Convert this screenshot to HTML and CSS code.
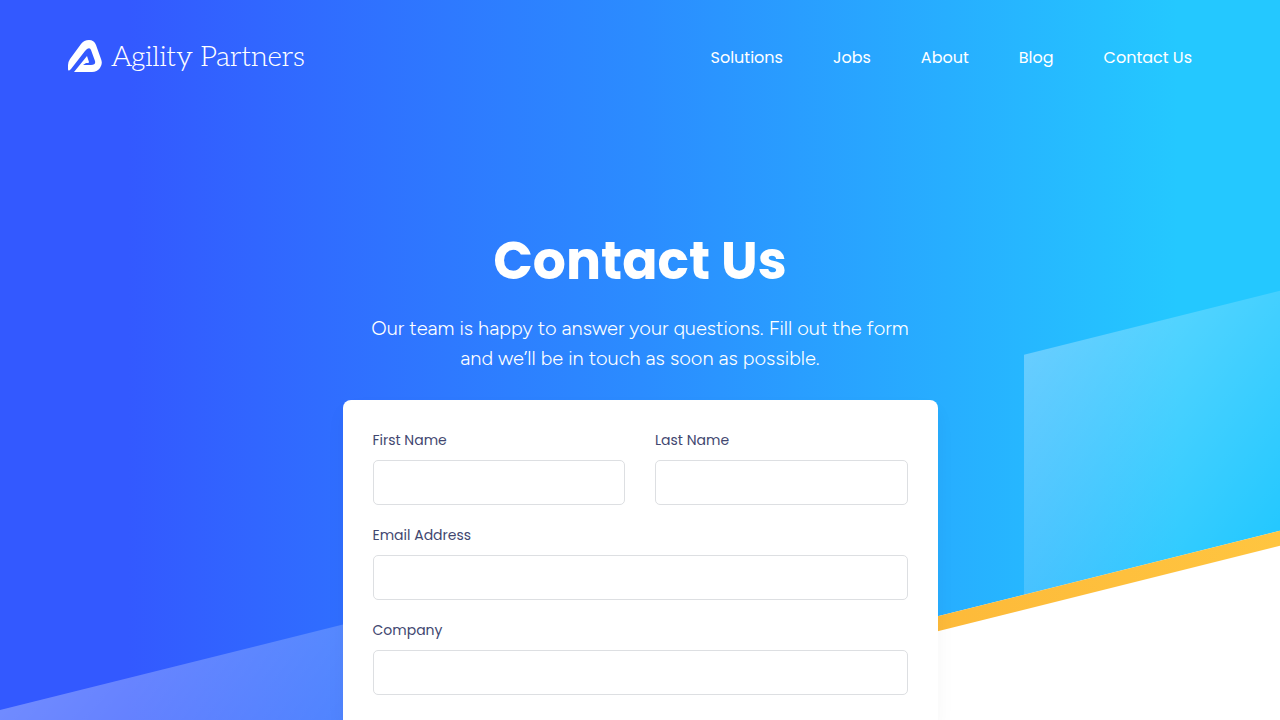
FILE: index.html
```html
<!DOCTYPE html>
<html lang="en">
<head>
<meta charset="utf-8">
<meta name="viewport" content="width=device-width, initial-scale=1">
<title>Contact Us | Agility Partners</title>
<link rel="stylesheet" href="styles.css">
</head>
<body>
<div class="page">
  <div class="backdrop" aria-hidden="true">
    <div class="stripe stripe-left"></div>
    <div class="stripe stripe-right"></div>
    <div class="stripe stripe-edge"></div>
  </div>
  <header class="header">
    <a class="brand" href="#">
      <svg class="brand-mark" viewBox="0 0 34 32" aria-hidden="true">
        <path fill="#fff" d="M0 29V25Q0 22 2 19L13 4Q16 0 21 0Q26 0 28 5L33 19Q35 24 32 28Q29 32 24 32H6L19 16L21 22Q21 23 20 23H18L15 25H23Q28 25 27 21L23 10Q22 7 19 9L17 11L3 29Q0 32 0 29Z"/>
      </svg>
      <span class="brand-name">Agility Partners</span>
    </a>
    <nav class="nav">
      <a href="#">Solutions</a>
      <a href="#">Jobs</a>
      <a href="#">About</a>
      <a href="#">Blog</a>
      <a href="#">Contact Us</a>
    </nav>
  </header>
  <main class="main">
    <h1 class="title">Contact Us</h1>
    <p class="lead">Our team is happy to answer your questions. Fill out the form and we’ll be in touch as soon as possible.</p>
    <form class="card">
      <div class="field">
        <label for="first">First Name</label>
        <input id="first" type="text">
      </div>
      <div class="field">
        <label for="last">Last Name</label>
        <input id="last" type="text">
      </div>
      <div class="field field-wide">
        <label for="email">Email Address</label>
        <input id="email" type="email">
      </div>
      <div class="field field-wide">
        <label for="company">Company</label>
        <input id="company" type="text">
      </div>
    </form>
  </main>
</div>
</body>
</html>
```
FILE: styles.css
```css
* { box-sizing: border-box; }

body {
  margin: 0;
  background: #fff;
  color: #424770;
  font-family: Poppins, Inter, sans-serif;
}

.page {
  position: relative;
  display: flex;
  flex-direction: column;
  min-height: 100vh;
  overflow: hidden;
}

/* Slanted gradient panel behind the content */
.backdrop {
  position: absolute;
  top: -400px;
  left: 0;
  right: 0;
  height: 1250px;
  transform: skewY(-14deg);
  transform-origin: left bottom;
  background: linear-gradient(90deg, #3359ff 10%, #2b8cff 50%, #24c8ff 92%);
}

.stripe { position: absolute; }

.stripe-left {
  left: 0;
  bottom: -100px;
  width: 33%;
  height: 240px;
  background: linear-gradient(135deg, rgba(255, 255, 255, 0.3), rgba(255, 255, 255, 0.08));
}

.stripe-right {
  right: 0;
  bottom: 0;
  width: 20%;
  height: 240px;
  background: linear-gradient(135deg, rgba(255, 255, 255, 0.3), rgba(255, 255, 255, 0));
}

.stripe-edge {
  right: 0;
  bottom: -15px;
  width: 50%;
  height: 15px;
  background: linear-gradient(90deg, #fbb034, #ffc540);
}

.header {
  position: relative;
  display: flex;
  justify-content: space-between;
  align-items: flex-start;
  padding: 36px 88px 0 68px;
}

.brand {
  display: flex;
  align-items: center;
  gap: 9px;
  height: 40px;
  color: #fff;
  text-decoration: none;
}

.brand-mark { width: 34px; height: 32px; }

.brand-name {
  padding-top: 4px;
  font-family: Museo, Aleo, "Roboto Slab", Lato, sans-serif;
  font-size: 28px;
  font-weight: 350;
  line-height: 40px;
}

.nav { display: flex; gap: 50px; }

.nav a {
  color: #fff;
  font-size: 16px;
  line-height: 44px;
  text-decoration: none;
}

.main {
  position: relative;
  flex: 1;
  display: flex;
  flex-direction: column;
  align-items: center;
  padding-top: 151px;
}

.title {
  margin: 0;
  color: #fff;
  font-size: 52px;
  font-weight: 700;
  line-height: 60px;
}

.lead {
  max-width: 595px;
  margin: 22px 0 27px;
  padding: 0 24px;
  color: #fff;
  font-family: "Proxima Nova", Figtree, Lato, sans-serif;
  font-size: 20px;
  font-weight: 350;
  font-variant-ligatures: none;
  line-height: 30px;
  text-align: center;
}

.card {
  flex: 1;
  display: grid;
  grid-template-columns: 1fr 1fr;
  align-content: start;
  gap: 20px 30px;
  width: 100%;
  max-width: 595px;
  padding: 30px 30px 25px;
  border-radius: 8px 8px 0 0;
  background: #fff;
  box-shadow: 0 10px 20px rgba(0, 0, 0, 0.04);
}

.field { display: flex; flex-direction: column; gap: 10px; }

.field-wide { grid-column: 1 / -1; }

.field label { font-size: 14px; line-height: 20px; }

.field input {
  width: 100%;
  height: 45px;
  padding: 0 12px;
  border: 1px solid #dddfe2;
  border-radius: 5px;
  background: #fff;
  color: inherit;
  font: inherit;
}
```
